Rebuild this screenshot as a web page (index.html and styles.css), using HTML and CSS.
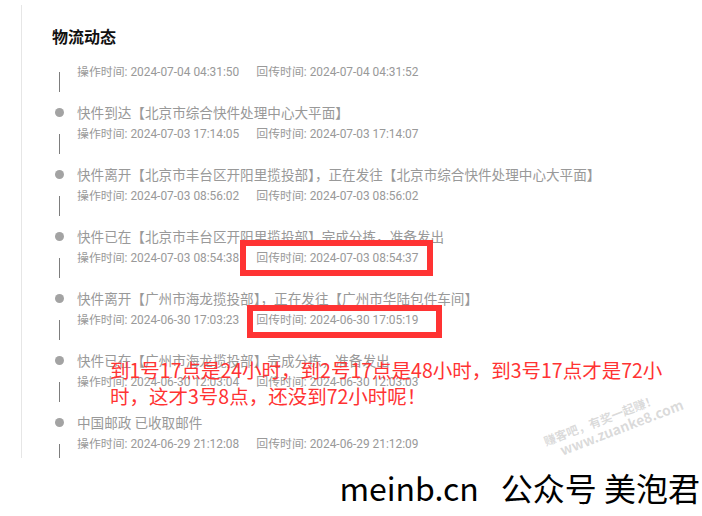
FILE: index.html
```html
<!DOCTYPE html>
<html>
<head>
  <title>物流动态</title>
  <meta name="viewport" content="width=device-width, initial-scale=1.0">
  <link rel="stylesheet" href="styles.css">
</head>
<body>
  <div class="panel">
    <h3 class="panel-title">物流动态</h3>
    <div class="timeline">
      <div class="step no-title">
        <span class="line"></span>
        <p class="time"><span>操作时间: 2024-07-04 04:31:50</span><span>回传时间: 2024-07-04 04:31:52</span></p>
      </div>
      <div class="step">
        <span class="dot"></span>
        <p class="desc">快件到达【北京市综合快件处理中心大平面】</p>
        <span class="line"></span>
        <p class="time"><span>操作时间: 2024-07-03 17:14:05</span><span>回传时间: 2024-07-03 17:14:07</span></p>
      </div>
      <div class="step">
        <span class="dot"></span>
        <p class="desc">快件离开【北京市丰台区开阳里揽投部】，正在发往【北京市综合快件处理中心大平面】</p>
        <span class="line"></span>
        <p class="time"><span>操作时间: 2024-07-03 08:56:02</span><span>回传时间: 2024-07-03 08:56:02</span></p>
      </div>
      <div class="step">
        <span class="dot"></span>
        <p class="desc">快件已在【北京市丰台区开阳里揽投部】完成分拣，准备发出</p>
        <span class="line"></span>
        <p class="time"><span>操作时间: 2024-07-03 08:54:38</span><span>回传时间: 2024-07-03 08:54:37</span></p>
      </div>
      <div class="step">
        <span class="dot"></span>
        <p class="desc">快件离开【广州市海龙揽投部】，正在发往【广州市华陆包件车间】</p>
        <span class="line"></span>
        <p class="time"><span>操作时间: 2024-06-30 17:03:23</span><span>回传时间: 2024-06-30 17:05:19</span></p>
      </div>
      <div class="step">
        <span class="dot"></span>
        <p class="desc">快件已在【广州市海龙揽投部】完成分拣，准备发出</p>
        <span class="line"></span>
        <p class="time"><span>操作时间: 2024-06-30 12:03:04</span><span>回传时间: 2024-06-30 12:03:03</span></p>
      </div>
      <div class="step">
        <span class="dot"></span>
        <p class="desc">中国邮政 已收取邮件</p>
        <span class="line"></span>
        <p class="time"><span>操作时间: 2024-06-29 21:12:08</span><span>回传时间: 2024-06-29 21:12:09</span></p>
      </div>
    </div>
  </div>

  <!-- annotations drawn over the screenshot -->
  <div class="mark mark-1"></div>
  <div class="mark mark-2"></div>
  <p class="note">到1号17点是24小时，到2号17点是48小时，到3号17点才是72小<br>时，这才3号8点，还没到72小时呢！</p>
  <div class="watermark">
    <span>赚客吧，有奖一起赚！</span>
    <span>www.zuanke8.com</span>
  </div>

  <div class="footer"><span class="site">meinb.cn</span>公众号 美泡君</div>
</body>
</html>
```

FILE: styles.css
```css
body {
  margin: 0;
  background: #fff;
  font-family: Roboto, "Noto Sans CJK SC", sans-serif;
  width: 702px;
  height: 516px;
  overflow: hidden;
  position: relative;
}
.panel {
  margin: 5px 0 0 21px;
  height: 453px;
  border-left: 1px solid #e6e6e6;
  padding-left: 30px;
  overflow: hidden;
  box-sizing: border-box;
}
.panel-title {
  margin: 20px 0 14px;
  font-family: "Noto Sans CJK SC", sans-serif;
  font-size: 16px;
  line-height: 22px;
  font-weight: bold;
  color: #111;
}
.step {
  display: grid;
  grid-template-columns: 14px auto;
  grid-template-rows: 22px 22px;
  column-gap: 11px;
  padding-bottom: 18px;
}
.step.no-title {
  grid-template-rows: 22px;
}
.step p {
  margin: 0;
  grid-column: 2;
  white-space: nowrap;
}
.dot {
  grid-column: 1;
  grid-row: 1;
  align-self: center;
  justify-self: center;
  width: 9px;
  height: 9px;
  border-radius: 50%;
  background: #a3a3a3;
}
.line {
  grid-column: 1;
  grid-row: 2;
  justify-self: center;
  width: 1px;
  height: 20px;
  margin-top: 11px;
  background: #7d7d7d;
}
.no-title .line {
  grid-row: 1;
}
.desc {
  grid-row: 1;
  font-family: "Noto Sans CJK SC", sans-serif;
  font-size: 13.6px;
  line-height: 22px;
  color: #999;
}
.time {
  grid-row: 2;
  font-size: 11.9px;
  line-height: 22px;
  color: #999;
}
.no-title .time {
  grid-row: 1;
}
.time span + span {
  margin-left: 17px;
}
.mark {
  position: absolute;
  border: 6px solid #ff3333;
  box-sizing: border-box;
}
.mark-1 {
  left: 240px;
  top: 240px;
  width: 193px;
  height: 36px;
}
.mark-2 {
  left: 247px;
  top: 305px;
  width: 195px;
  height: 33px;
}
.note {
  position: absolute;
  left: 110px;
  top: 357px;
  margin: 0;
  font-family: "Noto Sans CJK SC", sans-serif;
  font-size: 19.5px;
  line-height: 26px;
  color: #ff3333;
  white-space: nowrap;
}
.watermark {
  position: absolute;
  left: 552px;
  top: 432px;
  display: flex;
  flex-direction: column;
  transform: rotate(-21deg);
  transform-origin: left bottom;
  font-family: "Noto Sans CJK SC", sans-serif;
  font-weight: bold;
  font-size: 12px;
  line-height: 15px;
  color: rgba(150, 150, 150, 0.35);
}
.watermark span + span {
  font-size: 14px;
  padding-left: 12px;
}
.footer {
  margin-top: 9px;
  padding-right: 2px;
  text-align: right;
  font-family: "Noto Sans CJK SC", sans-serif;
  font-size: 32px;
  line-height: 40px;
  color: #000;
}
.footer .site {
  margin-right: 22px;
}
```
